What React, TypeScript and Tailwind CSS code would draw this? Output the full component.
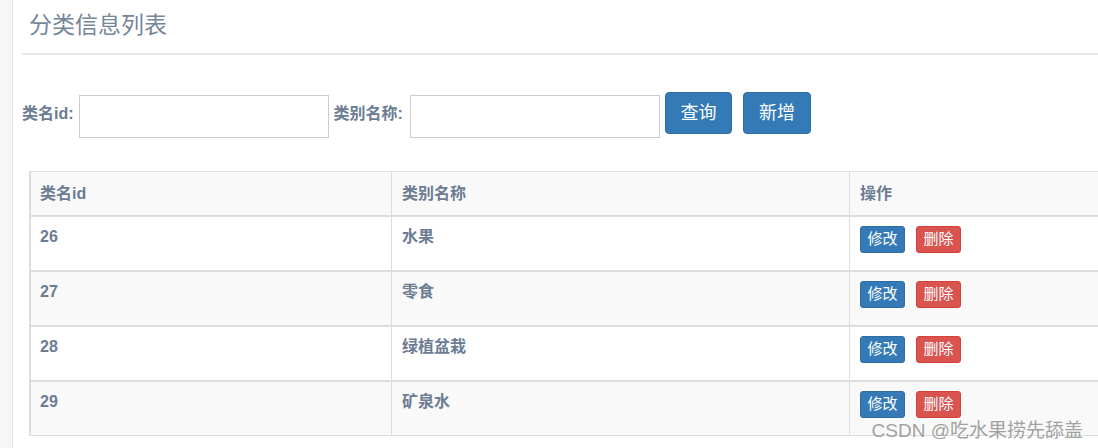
import React from 'react';

const rows = [
  { id: 26, name: '水果' },
  { id: 27, name: '零食' },
  { id: 28, name: '绿植盆栽' },
  { id: 29, name: '矿泉水' },
];

const font = { fontFamily: '"Liberation Sans", "Noto Sans CJK SC", sans-serif' };

export default function App() {
  return (
    <div className="relative flex h-[448px] w-[1098px] overflow-hidden bg-white text-[#6b7c93]" style={font}>
      {/* left rail */}
      <div className="w-[13px] shrink-0 border-r border-[#e6e6e6] bg-[#f6f6f6]" />

      <div className="flex min-w-0 flex-1 flex-col pl-[9px]">
        {/* heading */}
        <div className="border-b-2 border-[#e3e6ea] pb-[11px] pl-[7px] pt-[8px]">
          <h1 className="text-[23px] leading-[34px] font-normal text-[#75859a]">分类信息列表</h1>
        </div>

        {/* search form */}
        <div className="mt-[37px] flex items-start">
          <label className="mt-[12px] text-[16px] leading-[20px] font-bold">类名id:</label>
          <input className="ml-[5px] mt-[3px] h-[43px] w-[250px] border border-[#cccccc] bg-white outline-none" />
          <label className="ml-[5px] mt-[12px] text-[16px] leading-[20px] font-bold">类别名称:</label>
          <input className="ml-[7px] mt-[3px] h-[43px] w-[250px] border border-[#cccccc] bg-white outline-none" />
          <button className="ml-[5px] h-[42px] w-[67px] rounded-[4px] border border-[#2e6da4] bg-[#337ab7] text-[18px] text-white">
            查询
          </button>
          <button className="ml-[11px] h-[42px] w-[68px] rounded-[4px] border border-[#2e6da4] bg-[#337ab7] text-[18px] text-white">
            新增
          </button>
        </div>

        {/* table */}
        <div className="ml-[7px] mt-[33px] w-[1200px] border border-l-2 border-[#dddddd] text-[16px] font-bold">
          <div className="flex h-[43px] items-center bg-[#f9f9f9]">
            <div className="flex h-full w-[361px] items-center border-r border-[#dddddd] pl-[9px]">类名id</div>
            <div className="flex h-full w-[458px] items-center border-r border-[#dddddd] pl-[10px]">类别名称</div>
            <div className="flex h-full flex-1 items-center pl-[10px]">操作</div>
          </div>
          {rows.map((r, i) => (
            <div
              key={r.id}
              className={`flex h-[55px] border-t-2 border-[#dddddd] ${i % 2 === 1 ? 'bg-[#f9f9f9]' : 'bg-white'}`}
            >
              <div className="w-[361px] border-r border-[#dddddd] pl-[9px] pt-[9px] leading-[22px]">{r.id}</div>
              <div className="w-[458px] border-r border-[#dddddd] pl-[10px] pt-[9px] leading-[22px]">{r.name}</div>
              <div className="flex flex-1 items-start gap-[11px] pl-[10px] pt-[9px] font-normal">
                <button className="h-[27px] w-[45px] rounded-[3px] border border-[#2e6da4] bg-[#337ab7] text-[15px] text-white">
                  修改
                </button>
                <button className="h-[27px] w-[45px] rounded-[3px] border border-[#d43f3a] bg-[#d9534f] text-[15px] text-white">
                  删除
                </button>
              </div>
            </div>
          ))}
        </div>
      </div>

      {/* watermark */}
      <div className="absolute bottom-[6px] right-[15px] text-[19px] leading-[22px] text-[#8a8a8a]/80">
        CSDN @吃水果捞先舔盖
      </div>
    </div>
  );
}
